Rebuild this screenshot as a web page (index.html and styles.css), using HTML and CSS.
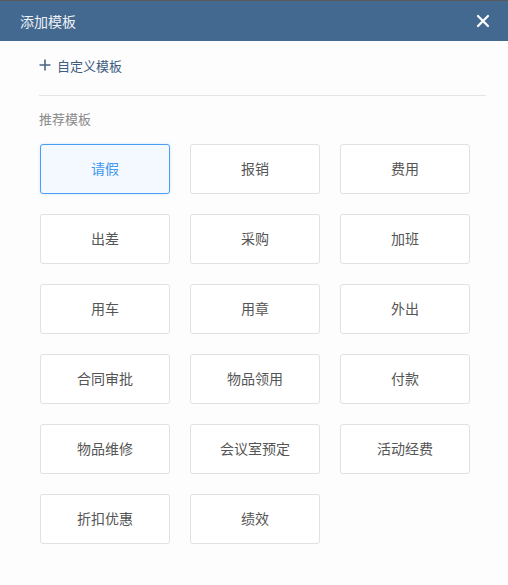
FILE: index.html
```html
<!DOCTYPE html>
<html lang="zh">
<head>
<meta charset="utf-8">
<link rel="stylesheet" href="styles.css">
</head>
<body>
<div class="dialog">
  <div class="header">
    <span class="title">添加模板</span>
    <svg class="close" width="14" height="14" viewBox="0 0 14 14"><path d="M2 2 L12 12 M12 2 L2 12" stroke="#fff" stroke-width="2.2" stroke-linecap="round"/></svg>
  </div>
  <div class="body">
    <div class="custom">
      <svg width="12" height="12" viewBox="0 0 12 12"><path d="M6 0.5 V11.5 M0.5 6 H11.5" stroke="#4a6585" stroke-width="1.6"/></svg>
      <span>自定义模板</span>
    </div>
    <div class="divider"></div>
    <div class="label">推荐模板</div>
    <div class="grid">
      <div class="card active">请假</div>
      <div class="card">报销</div>
      <div class="card">费用</div>
      <div class="card">出差</div>
      <div class="card">采购</div>
      <div class="card">加班</div>
      <div class="card">用车</div>
      <div class="card">用章</div>
      <div class="card">外出</div>
      <div class="card">合同审批</div>
      <div class="card">物品领用</div>
      <div class="card">付款</div>
      <div class="card">物品维修</div>
      <div class="card">会议室预定</div>
      <div class="card">活动经费</div>
      <div class="card">折扣优惠</div>
      <div class="card">绩效</div>
    </div>
  </div>
</div>
</body>
</html>
```

FILE: styles.css
```css
* { box-sizing: border-box; }
html, body { margin: 0; padding: 0; background: #fdfdfd; }
body {
  font-family: "Noto Sans CJK SC", "Noto Sans", sans-serif;
  border-top: 1px solid #5a5a5a;
  width: 508px;
  height: 585px;
  overflow: hidden;
}
.header {
  height: 40px;
  background: #446990;
  display: flex;
  align-items: center;
  justify-content: space-between;
  padding: 0 18px 0 20px;
}
.title {
  color: #eef2f6;
  font-size: 14px;
}
.close { display: block; }
.body {
  padding: 0 22px 0 39px;
}
.custom {
  display: flex;
  align-items: center;
  gap: 6px;
  height: 54px;
  color: #3d5c80;
  font-size: 13px;
  padding-bottom: 6px;
}
.custom svg { display: block; }
.divider {
  height: 1px;
  background: #e4e4e4;
  width: 447px;
}
.label {
  color: #8a8a8a;
  font-size: 13px;
  margin-top: 14px;
  line-height: 18px;
}
.grid {
  display: grid;
  grid-template-columns: repeat(3, 130px);
  grid-auto-rows: 50px;
  gap: 20px;
  margin-top: 16px;
  padding-left: 1px;
}
.card {
  border: 1px solid #e1e1e1;
  border-radius: 3px;
  background: #fff;
  display: flex;
  align-items: center;
  justify-content: center;
  font-size: 14px;
  color: #555;
  padding-bottom: 3px;
}
.card.active {
  border-color: #4b9ff2;
  background: #f4f9ff;
  color: #3e97f0;
  box-shadow: 0 0 3px rgba(75,159,242,0.25);
}
```
